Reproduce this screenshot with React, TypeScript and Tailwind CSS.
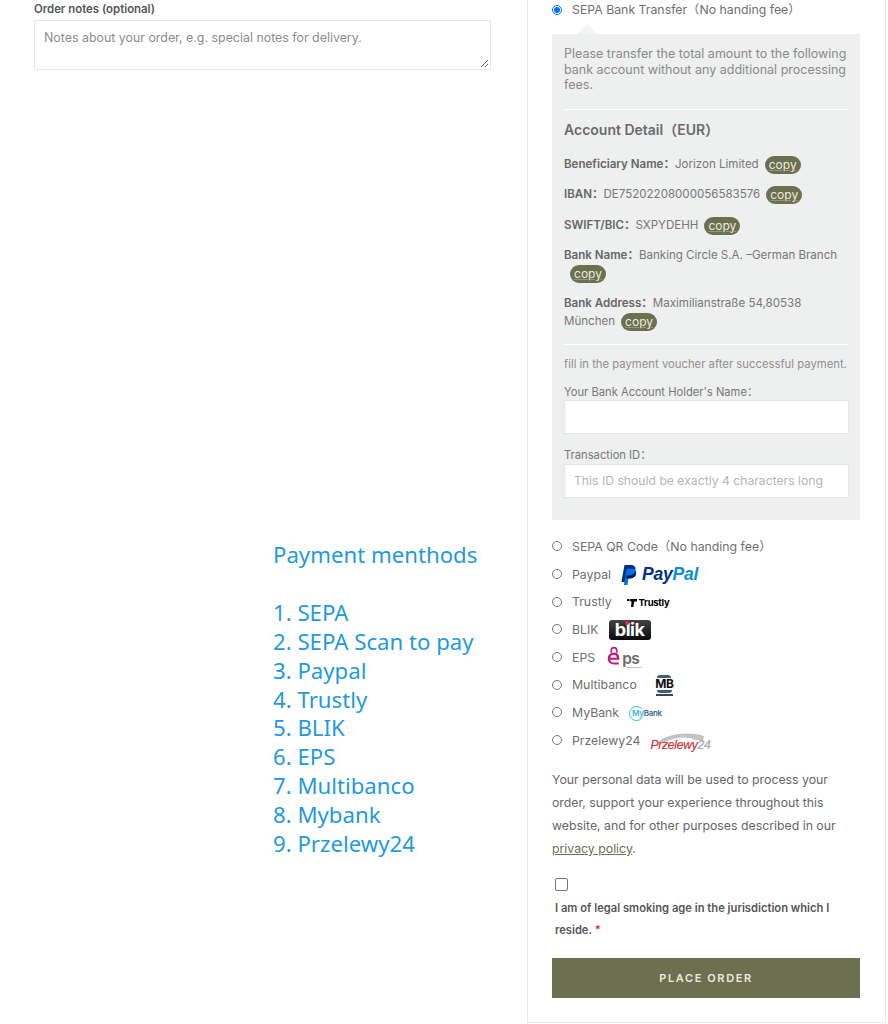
import React from "react"

const inter = "font-['Inter','Noto_Sans_CJK_SC',sans-serif]"

function Copy() {
  return (
    <span className="my-[-1px] ml-[6px] inline-block h-[18px] w-[36px] rounded-full bg-[#6d7050] text-center align-middle text-[12px] leading-[18px] text-[#e9eadf] underline decoration-[#e9eadf]/30">
      copy
    </span>
  )
}

function PayPalLogo() {
  return (
    <span className="ml-[10px] flex items-center gap-[5px]">
      <svg width="16" height="20" viewBox="0 0 16 20">
        <path d="M3.500 0h6.200c3.400 0 5.200 1.800 4.700 4.900-.6 3.800-3 5.600-6.500 5.600H5.600L4.500 17H.4z" fill="#003087" />
        <path d="M5.600 3.800h5c2.900 0 5 1.400 4.600 4.400-.5 3.400-2.800 5.200-6 5.200H7.400L6.500 20H2.900z" fill="#0070e0" />
        <path d="M5.600 10.500h2.300c2.700 0 5-1.200 6.100-3.700.6.4 1.200.8 1.200 1.400-.5 3.400-2.800 5.200-6 5.200H5z" fill="#001c64" />
      </svg>
      <span className="font-['Liberation_Sans',sans-serif] text-[17.500px] font-bold italic leading-none tracking-[-0.2px]">
        <span className="text-[#003087]">Pay</span>
        <span className="text-[#0a8fd6]">Pal</span>
      </span>
    </span>
  )
}

function TrustlyLogo() {
  return (
    <span className="ml-[15px] flex items-center gap-[2px]">
      <svg width="10" height="8" viewBox="0 0 10 8">
        <path d="M0 0h2.500v2H0zM3.200 0H10v2.400H7.200L6.400 8H4l.6-5.600H3.200z" fill="#000" />
      </svg>
      <span className="font-['Inter',sans-serif] text-[9.500px] font-bold leading-none tracking-[-0.3px] text-black">Trustly</span>
    </span>
  )
}

function BlikLogo() {
  return (
    <span className="relative ml-[10px] flex h-[20px] w-[42px] items-center justify-center rounded-[3px] bg-gradient-to-b from-[#444] to-[#0b0b0b]">
      <span className="font-['Inter',sans-serif] text-[18px] font-bold leading-none tracking-[-0.5px] text-white">blik</span>
      <span className="absolute left-[16px] top-[1px] h-[4px] w-[4px] rounded-full bg-[#e5284a]" />
    </span>
  )
}

function EpsLogo() {
  return (
    <span className="relative ml-[12px] flex h-[22px] w-[34px] items-start">
      <svg width="14" height="18" viewBox="0 0 15 19">
        <path d="M4.500 6V3.500a3 3 0 0 1 6 0V6" fill="none" stroke="#c4177c" strokeWidth="1.800" />
        <path d="M13.200 13.500H3.400c.4 2 2 3 4.400 3h4.800v2H7.500C3 18.500.8 16 .8 12.300S3 6 7.500 6c4.300 0 6 2.700 5.700 7.500zM3.500 11.400h7c-.1-2-1.300-3.300-3.400-3.300-2 0-3.300 1.300-3.600 3.300z" fill="#c4177c" />
      </svg>
      <span className="ml-[1px] mt-[4px] font-['Inter',sans-serif] text-[15.500px] font-semibold leading-none tracking-[-0.5px] text-[#6b6b6b]">ps</span>
      <span className="absolute right-[-1px] top-[20px] h-px w-[16px] bg-[#c4c4c4]" />
    </span>
  )
}

function MultibancoLogo() {
  return (
    <span className="ml-[19px] flex w-[17px] flex-col items-center">
      <span className="h-[3px] w-[14px] rounded-t-[3px] bg-[#3f5f80]" />
      <span className="mt-[1px] font-['Inter',sans-serif] text-[12px] font-bold leading-[10px] tracking-[-0.5px] text-[#111]">MB</span>
      <span className="mt-[1px] h-[3px] w-[15px] rounded-b-[3px] bg-[#3f5f80]" />
      <span className="mt-[1px] h-[1.500px] w-[17px] bg-[#444]" />
    </span>
  )
}

function MyBankLogo() {
  return (
    <span className="relative ml-[10px] flex h-[15px] w-[30px] items-center">
      <span className="h-[15px] w-[15px] rounded-full border-[1.500px] border-[#35b8e0]" />
      <span className="absolute left-[3px] top-[3px] whitespace-nowrap bg-white/70 font-['Inter',sans-serif] text-[8px] font-semibold leading-[9px] tracking-[-0.3px]">
        <span className="text-[#35b8e0]">My</span>
        <span className="text-[#3a6b8f]">Bank</span>
      </span>
    </span>
  )
}

function PrzelewyLogo() {
  return (
    <span className="relative ml-[10px] flex h-[20px] w-[58px] items-end">
      <svg className="absolute left-[6px] top-0" width="50" height="12" viewBox="0 0 50 12">
        <path d="M2 11C12 3 30 0 48 5l-1 5-7-1C31 5 18 6 9 11z" fill="#c2c2c2" />
      </svg>
      <span className="relative whitespace-nowrap font-['Liberation_Sans',sans-serif] text-[12.200px] italic leading-none tracking-[-0.3px] [-webkit-text-stroke:0.2px]">
        <span className="text-[#d13239]">Przelewy</span>
        <span className="text-[#a8a8a8]">24</span>
      </span>
    </span>
  )
}

const methods: [string, React.ReactNode][] = [
  ["SEPA QR Code（No handing fee）", null],
  ["Paypal", <PayPalLogo />],
  ["Trustly", <TrustlyLogo />],
  ["BLIK", <BlikLogo />],
  ["EPS", <EpsLogo />],
  ["Multibanco", <MultibancoLogo />],
  ["MyBank", <MyBankLogo />],
  ["Przelewy24", <PrzelewyLogo />],
]

const annotation = ["SEPA", "SEPA Scan to pay", "Paypal", "Trustly", "BLIK", "EPS", "Multibanco", "Mybank", "Przelewy24"]

function AccountDetail() {
  return (
    <div className="relative mt-[13px] bg-[#eeefef] px-[12px] pb-[22px] pt-[12px]">
      <span className="absolute left-[25px] top-[-10px] h-0 w-0 border-x-[10px] border-b-[10px] border-x-transparent border-b-[#f3f4f4]" />
      <p className="text-[12.500px] leading-[15.700px] text-[#8a8a8a]">
        Please transfer the total amount to the following bank account without any additional processing fees.
      </p>
      <div className="mt-[16px] h-px bg-white" />
      <h3 className="mt-[11px] text-[14px] font-semibold leading-[18px] text-[#6b6b6b]">Account Detail（EUR）</h3>
      <div className="mt-[16px] flex flex-col gap-[12.300px] text-[11.550px] leading-[18px] text-[#777]">
        <div>
          <b className="font-semibold text-[#666]">Beneficiary Name：</b>Jorizon Limited<Copy />
        </div>
        <div>
          <b className="font-semibold text-[#666]">IBAN：</b>DE75202208000056583576<Copy />
        </div>
        <div>
          <b className="font-semibold text-[#666]">SWIFT/BIC：</b>SXPYDEHH<Copy />
        </div>
        <div>
          <b className="font-semibold text-[#666]">Bank Name：</b>Banking Circle S.A. –German Branch<Copy />
        </div>
        <div>
          <b className="font-semibold text-[#666]">Bank Address：</b>Maximilianstraße 54,80538 München<Copy />
        </div>
      </div>
      <div className="mt-[14px] h-px bg-white" />
      <p className="mt-[11px] whitespace-nowrap text-[11.300px] leading-[16px] text-[#8f8f8f]">
        fill in the payment voucher after successful payment.
      </p>
      <label className="mt-[12px] block text-[11.200px] leading-[16px] text-[#777]">Your Bank Account Holder's Name：</label>
      <div className="h-[34px] w-[285px] border border-[#e6e6e6] bg-white" />
      <label className="mt-[13px] block text-[11.200px] leading-[16px] text-[#777]">Transaction ID：</label>
      <div className="mt-[1px] flex h-[34px] w-[285px] items-center whitespace-nowrap border border-[#e6e6e6] bg-white px-[9px] text-[12.200px] text-[#b5b5b5]">
        This ID should be exactly 4 characters long
      </div>
    </div>
  )
}

export default function App() {
  return (
    <div className={`flex h-[1024px] w-[888px] overflow-hidden bg-white ${inter}`}>
      <div className="flex w-[527px] shrink-0 flex-col pl-[34px]">
        <label className="mt-[1px] text-[11.400px] font-semibold leading-[16px] text-[#555]">Order notes (optional)</label>
        <div className="relative mt-[3px] h-[50px] w-[457px] border border-[#e8e8e8] px-[9px] pt-[9px] text-[12.400px] leading-[16px] text-[#8c8c8c]">
          Notes about your order, e.g. special notes for delivery.
          <svg className="absolute bottom-[1px] right-[1px]" width="9" height="9" viewBox="0 0 9 9">
            <path d="M1 8 8 1M5 8l3-3" stroke="#666" strokeWidth="1" fill="none" />
          </svg>
        </div>
        <div className="ml-[239px] mt-[471px] font-['Noto_Sans',sans-serif] text-[22.200px] leading-[28.900px] text-[#1f9ae0]">
          <div className="mb-[28.900px]">Payment menthods</div>
          {annotation.map((name, i) => (
            <div key={name}>
              {i + 1}. {name}
            </div>
          ))}
        </div>
      </div>

      <div className="mb-px w-[359px] shrink-0 border-x border-b border-[#e8e8e8] pl-[24px] pr-[25px]">
        <div className="flex h-[21px] items-center">
          <input type="radio" defaultChecked className="m-0 mt-[-2px] h-[10px] w-[10px]" />
          <span className="ml-[10px] text-[12.300px] text-[#6f6f6f]">SEPA Bank Transfer（No handing fee）</span>
        </div>
        <AccountDetail />

        <div className="mt-[13px] flex flex-col">
          {methods.map(([name, logo]) => (
            <div key={name} className="flex h-[27.700px] items-center">
              <input type="radio" name="method" className="m-0 mt-[-2px] h-[10px] w-[10px]" />
              <span className="ml-[10px] whitespace-nowrap text-[12.300px] text-[#6f6f6f]">{name}</span>
              {logo}
            </div>
          ))}
        </div>

        <p className="mt-[13px] text-[12.300px] leading-[23px] text-[#666]">
          Your personal data will be used to process your order, support your experience throughout this website, and for other purposes described in our{" "}
          <span className="text-[#6d7050] underline">privacy policy</span>.
        </p>

        <div className="ml-[3px] mt-[18px] h-[13px] w-[13px] rounded-[2px] border border-[#777] bg-white" />
        <p className="ml-[3px] mt-[6px] text-[11.200px] font-semibold leading-[22px] text-[#555]">
          I am of legal smoking age in the jurisdiction which I reside. <span className="text-[#d9232e]">*</span>
        </p>

        <button className="mt-[17px] flex h-[40px] w-full items-center justify-center bg-[#6d7050] text-[11px] font-semibold tracking-[1.600px] text-[#e9eadf]">
          PLACE ORDER
        </button>
      </div>
    </div>
  )
}
